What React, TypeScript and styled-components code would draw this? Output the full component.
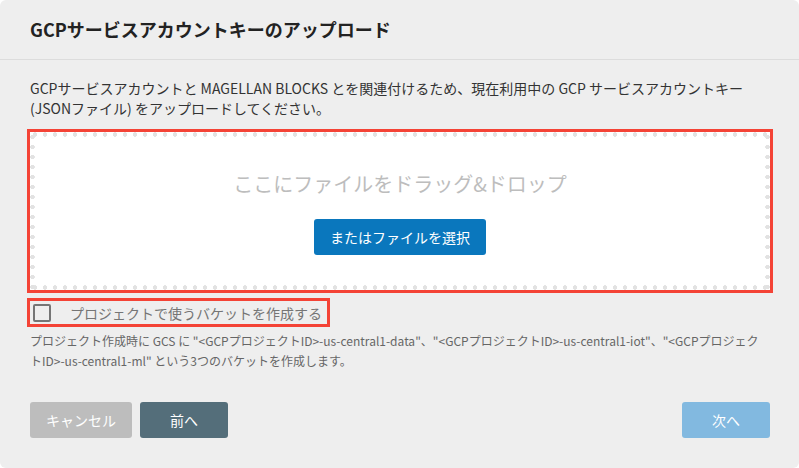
import React, { useState } from "react";
import styled, { createGlobalStyle } from "styled-components";

const GlobalStyle = createGlobalStyle`
  html, body {
    margin: 0;
    padding: 0;
    background: #ffffff;
  }
  body {
    font-family: "Noto Sans CJK JP", "Noto Sans", sans-serif;
  }
  * {
    box-sizing: border-box;
  }
`;

const Modal = styled.div`
  width: 799px;
  height: 468px;
  background: #eeeeee;
  border-radius: 6px;
  display: flex;
  flex-direction: column;
  overflow: hidden;
`;

const Header = styled.div`
  height: 60px;
  padding: 0 30px;
  display: flex;
  align-items: center;
  border-bottom: 1px solid #dcdcdc;
`;

const Title = styled.h2`
  margin: 0 0 1px;
  font-size: 18px;
  font-weight: 700;
  color: #222222;
  line-height: 24px;
`;

const Body = styled.div`
  padding: 18px 29px 0 30px;
  display: flex;
  flex-direction: column;
`;

const Description = styled.p`
  margin: 0;
  font-size: 14px;
  line-height: 20px;
  color: #333333;
`;

// dotted frame drawn with repeated dots, 10px apart like the reference
const DropZone = styled.div`
  margin-top: 14px;
  height: 158px;
  padding: 38px 5px 0;
  outline: 3px solid #f44336;
  background-color: #ffffff;
  background-image: radial-gradient(circle, #e2e2e2 2px, transparent 2.5px),
    radial-gradient(circle, #e2e2e2 2px, transparent 2.5px),
    radial-gradient(circle, #e2e2e2 2px, transparent 2.5px),
    radial-gradient(circle, #e2e2e2 2px, transparent 2.5px);
  background-size: 10px 5px, 10px 5px, 5px 10px, 5px 10px;
  background-repeat: repeat-x, repeat-x, repeat-y, repeat-y;
  background-position: 0 0, 0 100%, 0 0, 100% 0;
  display: flex;
  flex-direction: column;
  align-items: center;
`;

const DropText = styled.div`
  font-size: 20px;
  line-height: 28px;
  color: #bdbdbd;
`;

const Button = styled.button<{ $bg: string; $minWidth?: number }>`
  height: 36px;
  min-width: ${(p) => (p.$minWidth ? `${p.$minWidth}px` : "auto")};
  padding: 0 16px;
  border: none;
  border-radius: 3px;
  background: ${(p) => p.$bg};
  color: #ffffff;
  font-family: inherit;
  font-size: 14px;
  line-height: 20px;
  cursor: pointer;
`;

const SelectButton = styled(Button)`
  margin-top: 21px;
`;

const CheckRow = styled.label`
  margin-top: 11px;
  align-self: flex-start;
  height: 23px;
  width: 297px;
  padding-left: 3px;
  display: flex;
  align-items: center;
  gap: 19px;
  outline: 3px solid #f44336;
  cursor: pointer;
`;

const Box = styled.span<{ $checked: boolean }>`
  width: 18px;
  height: 18px;
  border: 2px solid #757575;
  border-radius: 2px;
  background: ${(p) => (p.$checked ? "#757575" : "transparent")};
`;

const CheckLabel = styled.span`
  font-size: 14px;
  line-height: 20px;
  color: #757575;
`;

const Help = styled.p`
  margin: 7px 0 0;
  font-size: 12px;
  line-height: 20px;
  color: #666666;
`;

const Footer = styled.div`
  margin-top: auto;
  padding: 0 29px 30px 30px;
  display: flex;
  justify-content: space-between;
`;

const ButtonGroup = styled.div`
  display: flex;
  gap: 8px;
`;

export default function App() {
  const [checked, setChecked] = useState(false);

  return (
    <>
      <GlobalStyle />
      <Modal>
        <Header>
          <Title>GCPサービスアカウントキーのアップロード</Title>
        </Header>
        <Body>
          <Description>
            GCPサービスアカウントと MAGELLAN BLOCKS とを関連付けるため、現在利用中の GCP
            サービスアカウントキー (JSONファイル) をアップロードしてください。
          </Description>
          <DropZone>
            <DropText>ここにファイルをドラッグ&amp;ドロップ</DropText>
            <SelectButton $bg="#0a77bd">またはファイルを選択</SelectButton>
          </DropZone>
          <CheckRow onClick={() => setChecked(!checked)}>
            <Box $checked={checked} />
            <CheckLabel>プロジェクトで使うバケットを作成する</CheckLabel>
          </CheckRow>
          <Help>
            プロジェクト作成時に GCS に "&lt;GCPプロジェクトID&gt;-us-central1-data"、"&lt;GCPプロジェクトID&gt;-us-central1-iot"、"&lt;GCPプロジェクトID&gt;-us-central1-ml"
            という3つのバケットを作成します。
          </Help>
        </Body>
        <Footer>
          <ButtonGroup>
            <Button $bg="#bdbdbd">キャンセル</Button>
            <Button $bg="#546e7a" $minWidth={88}>
              前へ
            </Button>
          </ButtonGroup>
          <Button $bg="#82b9e0" $minWidth={88}>
            次へ
          </Button>
        </Footer>
      </Modal>
    </>
  );
}
